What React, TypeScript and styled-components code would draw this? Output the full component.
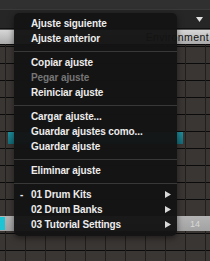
import React from 'react';
import styled, { createGlobalStyle } from 'styled-components';

const Global = createGlobalStyle`
  html, body {
    margin: 0;
    padding: 0;
    background: #2e2e2e;
  }
  body {
    width: 210px;
    height: 261px;
    overflow: hidden;
    font-family: "Liberation Sans", Arial, sans-serif;
  }
`;

const Screen = styled.div`
  position: relative;
  width: 210px;
  height: 261px;
  display: flex;
  flex-direction: column;
  overflow: hidden;
  background: #2e2e2e;
`;

const TopBar = styled.div`
  height: 11px;
  background: #303030;
  border-bottom: 1px solid #3a3a3a;
`;

const SelectRow = styled.div`
  height: 21px;
  display: flex;
  align-items: center;
  justify-content: flex-end;
  padding-right: 7px;
  background: #262626;
  border-bottom: 1px solid #111;
`;

const TabBar = styled.div`
  height: 16px;
  display: flex;
  align-items: center;
  justify-content: flex-end;
  padding-right: 1px;
  background: linear-gradient(#d6d6d6, #bdbdbd 60%, #a9a9a9);
  border-top: 1px solid #555;
  font-size: 10.5px;
  color: #111;
  letter-spacing: 0.4px;
  white-space: nowrap;
`;

const Grid = styled.div<{ $h: number }>`
  position: relative;
  height: ${p => p.$h}px;
  flex-shrink: 0;
  background-color: #3a3634;
  background-image:
    repeating-linear-gradient(to right, transparent 0 5px, #211e1d 5px 6px, transparent 6px 20px),
    repeating-linear-gradient(to bottom, #0c0b0b 0 1px, transparent 1px 17px);
  background-position: 0 0, 0 2px;
`;

const Ruler = styled.div`
  position: relative;
  height: 15px;
  display: flex;
  align-items: center;
  justify-content: flex-end;
  padding-right: 10px;
  background: linear-gradient(#b4b4b4, #a2a2a2);
  font-size: 9px;
  color: #d8d8d8;
  flex-shrink: 0;
`;

const RulerStart = styled.div`
  position: absolute;
  left: 0;
  top: 1px;
  width: 5px;
  height: 13px;
  background: #1ec4d4;
`;

const Note = styled.div`
  position: absolute;
  left: 8px;
  top: 88px;
  width: 175px;
  height: 12px;
  background: linear-gradient(#1f8d9c, #136c78);
`;

const Menu = styled.div`
  position: absolute;
  left: 14px;
  top: 13px;
  width: 163px;
  height: 223px;
  box-sizing: border-box;
  padding: 3px 0 4px;
  border-radius: 5px;
  background: rgba(20, 20, 20, 0.97);
  box-shadow: 0 2px 6px rgba(0, 0, 0, 0.5);
  display: flex;
  flex-direction: column;
`;

const Item = styled.div<{ $disabled?: boolean }>`
  position: relative;
  height: 15px;
  line-height: 15px;
  padding-left: 17px;
  font-size: 10px;
  font-weight: bold;
  letter-spacing: -0.1px;
  color: ${p => (p.$disabled ? '#767676' : '#ececec')};
  white-space: nowrap;
`;

const Mark = styled.span`
  position: absolute;
  left: 6px;
  top: 0;
`;

const Arrow = styled.svg`
  position: absolute;
  right: 6px;
  top: 4px;
`;

const Separator = styled.div`
  height: 9px;
  flex-shrink: 0;
  &::after {
    content: '';
    display: block;
    margin-top: 5px;
    height: 1px;
    background: #383838;
  }
`;

const DownArrow = () => (
  <svg width="7" height="5" viewBox="0 0 7 5">
    <path d="M0 0 H7 L3.5 5 Z" fill="#e0e0e0" />
  </svg>
);

const SubArrow = () => (
  <Arrow width="6" height="7" viewBox="0 0 6 7">
    <path d="M0 0 L6 3.5 L0 7 Z" fill="#d8d8d8" />
  </Arrow>
);

type Entry = { label: string; disabled?: boolean; sub?: boolean; mark?: string } | 'sep';

const entries: Entry[] = [
  { label: 'Ajuste siguiente' },
  { label: 'Ajuste anterior' },
  'sep',
  { label: 'Copiar ajuste' },
  { label: 'Pegar ajuste', disabled: true },
  { label: 'Reiniciar ajuste' },
  'sep',
  { label: 'Cargar ajuste...' },
  { label: 'Guardar ajustes como...' },
  { label: 'Guardar ajuste' },
  'sep',
  { label: 'Eliminar ajuste' },
  'sep',
  { label: '01 Drum Kits', sub: true, mark: '-' },
  { label: '02 Drum Banks', sub: true },
  { label: '03 Tutorial Settings', sub: true },
];

export default function App() {
  return (
    <>
      <Global />
      <Screen>
        <TopBar />
        <SelectRow>
          <DownArrow />
        </SelectRow>
        <TabBar>Environment</TabBar>
        <Grid $h={172}>
          <Note />
        </Grid>
        <Ruler>
          <RulerStart />
          14
        </Ruler>
        <Grid $h={30} />

        <Menu>
          {entries.map((e, i) =>
            e === 'sep' ? (
              <Separator key={i} />
            ) : (
              <Item key={i} $disabled={e.disabled}>
                {e.mark && <Mark>{e.mark}</Mark>}
                {e.label}
                {e.sub && <SubArrow />}
              </Item>
            )
          )}
        </Menu>
      </Screen>
    </>
  );
}
